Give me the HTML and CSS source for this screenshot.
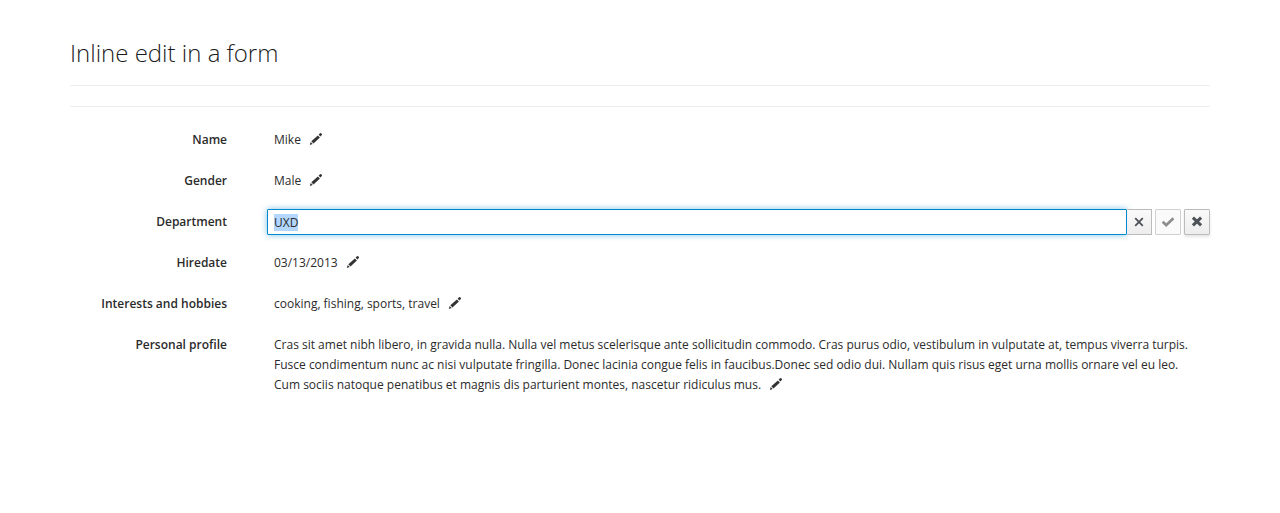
FILE: index.html
```html
<!DOCTYPE html>
<html lang="en">
<head>
<meta charset="utf-8">
<title>Inline edit in a form</title>
<link rel="stylesheet" href="styles.css">
</head>
<body>
<svg class="sprite" aria-hidden="true">
  <symbol id="pencil" viewBox="0 0 14 14"><path d="M.8 12.900l.9-2.900 2 2zM2.300 9.200L8.900 3.400l2 2L4.500 11.400zM9.600 2.700L11 1.300q.7-.6 1.400.1l.4.400q.6.700 0 1.300L11.500 4.600z"/></symbol>
  <symbol id="clear" viewBox="0 0 12 12"><path d="M2.200 2.200l7.600 7.600M9.800 2.200l-7.600 7.600" fill="none" stroke="currentColor" stroke-width="1.800"/></symbol>
  <symbol id="check" viewBox="0 0 14 14"><path d="M1.700 6.700l3.500 3.500L12.400 3.200" fill="none" stroke="currentColor" stroke-width="2.700"/></symbol>
  <symbol id="cross" viewBox="0 0 12 12"><path d="M1.900 1.700l8.200 7.600M10.100 1.700l-8.200 7.600" fill="none" stroke="currentColor" stroke-width="3.100"/></symbol>
</svg>
<main class="container">
  <h1 class="title">Inline edit in a form</h1>
  <hr class="rule">
  <form class="form">
    <div class="row"><label class="label">Name</label><div class="value">Mike<svg class="pencil"><use href="#pencil"/></svg></div></div>
    <div class="row"><label class="label">Gender</label><div class="value">Male<svg class="pencil"><use href="#pencil"/></svg></div></div>
    <div class="row"><label class="label">Department</label>
      <div class="editor">
        <div class="input"><span class="selected">UXD</span></div>
        <button type="button" class="btn clear" aria-label="Clear"><svg><use href="#clear"/></svg></button>
        <button type="button" class="btn save" aria-label="Save" disabled><svg><use href="#check"/></svg></button>
        <button type="button" class="btn cancel" aria-label="Cancel"><svg><use href="#cross"/></svg></button>
      </div>
    </div>
    <div class="row"><label class="label">Hiredate</label><div class="value">03/13/2013<svg class="pencil"><use href="#pencil"/></svg></div></div>
    <div class="row"><label class="label">Interests and hobbies</label><div class="value">cooking, fishing, sports, travel<svg class="pencil"><use href="#pencil"/></svg></div></div>
    <div class="row"><label class="label">Personal profile</label><div class="value">Cras sit amet nibh libero, in gravida nulla. Nulla vel metus scelerisque ante sollicitudin commodo. Cras purus odio, vestibulum in vulputate at, tempus viverra turpis.<br>Fusce condimentum nunc ac nisi vulputate fringilla. Donec lacinia congue felis in faucibus.Donec sed odio dui. Nullam quis risus eget urna mollis ornare vel eu leo.<br>Cum sociis natoque penatibus et magnis dis parturient montes, nascetur ridiculus mus.<svg class="pencil"><use href="#pencil"/></svg></div></div>
  </form>
</main>
</body>
</html>
```
FILE: styles.css
```css
* { box-sizing: border-box; }
body { margin: 0; background: #fff; color: #2b2b2b; font: 12px/20px "Open Sans", sans-serif; }
.sprite { display: none; }
.container { width: 1140px; margin: 0 auto; padding-top: 39px; }
.title { margin: 0; height: 47px; border-bottom: 1px solid #ededed; color: #1c1c1c; font-size: 24px; line-height: 28px; font-weight: 300; }
.rule { margin: 20px 0; border: 0; border-top: 1px solid #ededed; }
.form { display: flex; flex-direction: column; gap: 15px; }
.row { display: grid; grid-template-columns: 157px 943px; column-gap: 40px; min-height: 26px; }
.label { padding-top: 3px; text-align: right; font-weight: 600; }
.value { padding: 3px 0 3px 7px; white-space: nowrap; }
.pencil { width: 14px; height: 14px; margin-left: 8px; vertical-align: -2px; fill: #333; }
.editor { display: flex; height: 26px; }
.input { flex: 1; padding: 3px 6px 1px; border: 1px solid #0088ce; border-radius: 1px; box-shadow: 0 0 6px rgba(0, 136, 206, .5); }
.selected { background: #b3d7ff; }
.btn { display: flex; align-items: center; justify-content: center; width: 26px; height: 26px; margin-left: 3px; padding: 0; border: 1px solid #bbb; border-radius: 1px; background: linear-gradient(#fafafa, #ededed); color: #4d5258; box-shadow: 0 2px 3px rgba(3, 3, 3, .1); }
.btn svg { width: 12px; height: 12px; }
.clear { width: 25px; margin-left: 0; border-left: 0; box-shadow: none; }
.save { background: #fafafa; color: #8b8d8f; border-color: #d1d1d1; box-shadow: none; }
.save svg { width: 14px; height: 14px; }
```
